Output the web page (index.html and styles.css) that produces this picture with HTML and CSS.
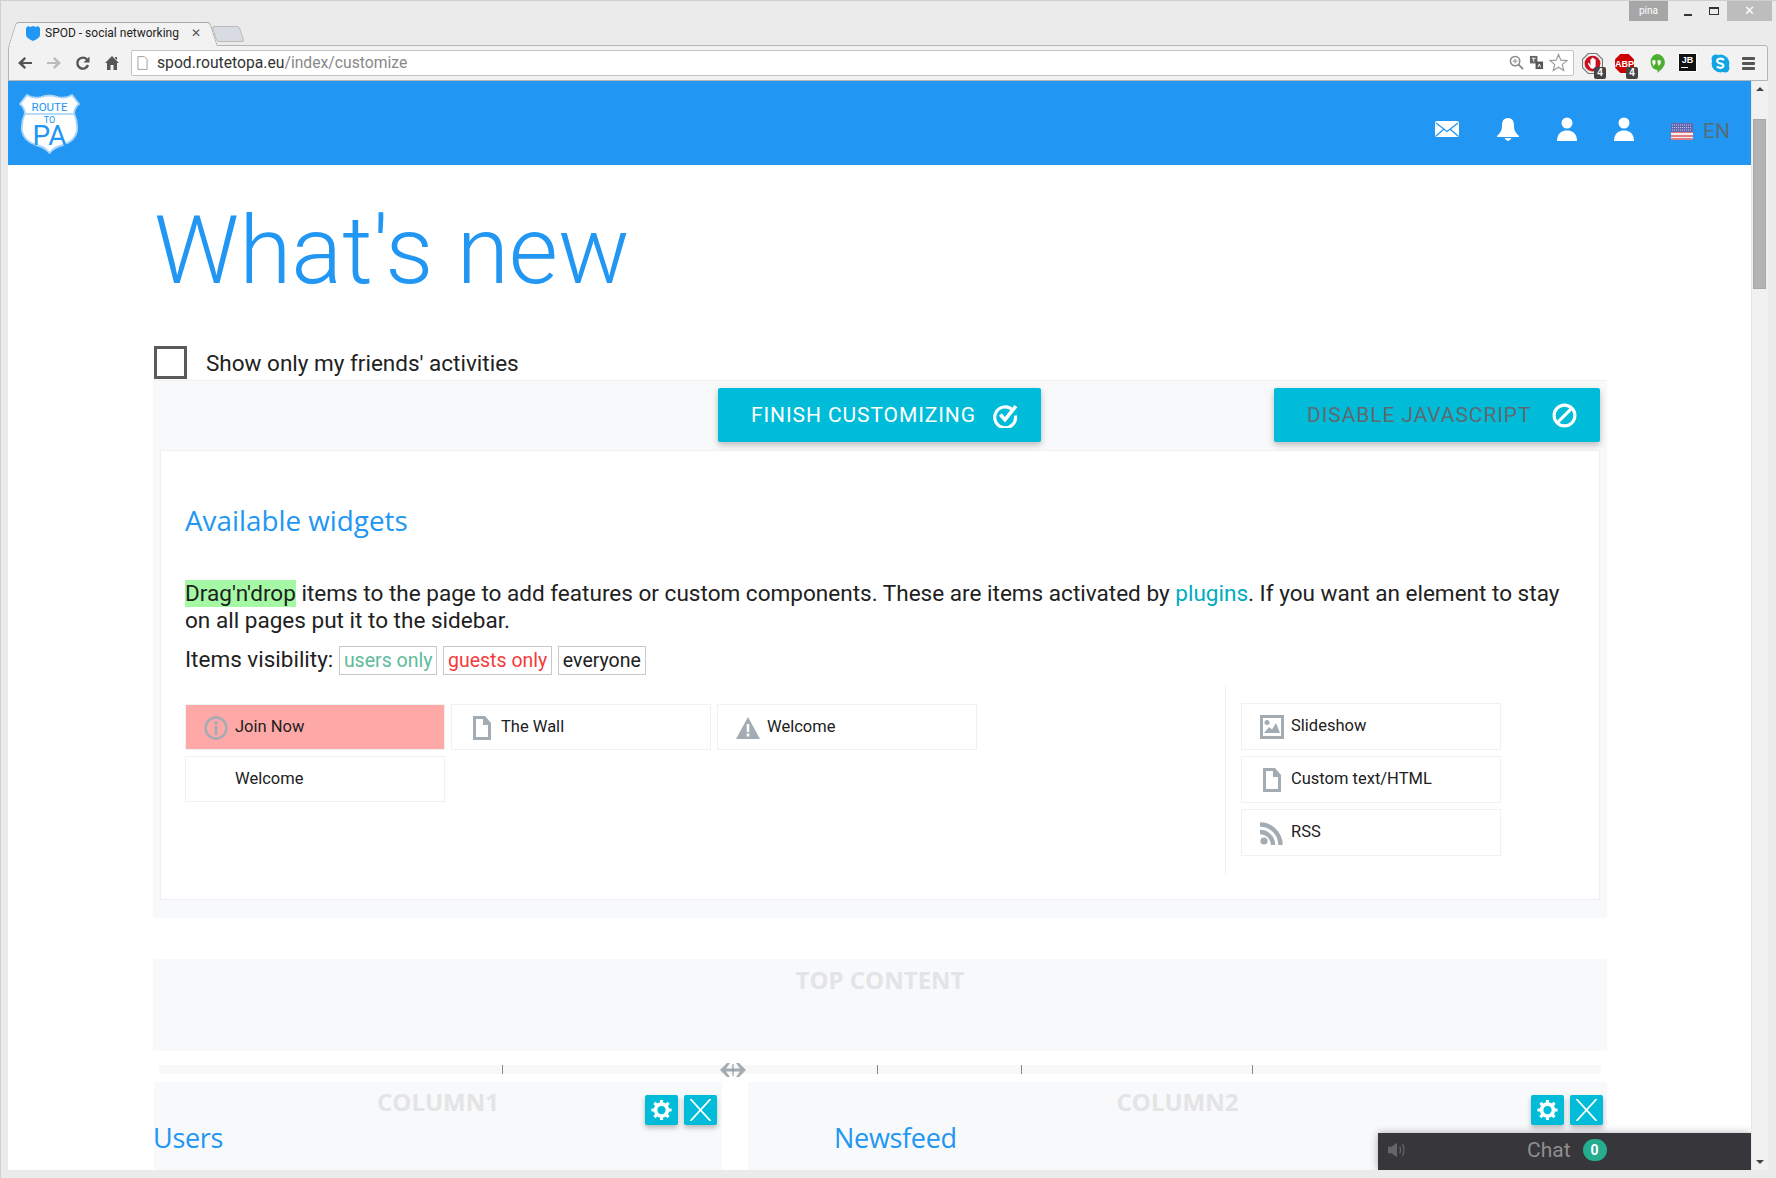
FILE: index.html
```html
<!DOCTYPE html>
<html lang="en">
<head>
  <meta charset="UTF-8" />
  <title>SPOD - social networking</title>
  <link rel="stylesheet" href="styles.css">
</head>
<body>
<div class="window">
  <div class="tabstrip">
    <div class="tab">
      <svg class="favicon" viewBox="0 0 16 16"><path d="M1 3 L3 1 L5 2 L8 1 L11 2 L13 1 L15 3 L15 10 Q15 13 8 16 Q1 13 1 10 Z" fill="#2196f3"/></svg>
      <span class="tab-title">SPOD - social networking</span>
      <span class="tab-close">✕</span>
    </div>
    <div class="newtab"></div>
    <div class="winbtns">
      <span class="user-badge">pina</span>
      <span class="winbtn"><i class="min"></i></span>
      <span class="winbtn"><i class="max"></i></span>
      <span class="winclose">✕</span>
    </div>
  </div>
  <div class="toolbar">
    <svg class="navicon" viewBox="0 0 16 16"><path d="M15 7 H6 L9 3.5 L7.5 2 L1 8 L7.5 14 L9 12.5 L6 9 H15 Z" fill="#555"/></svg>
    <svg class="navicon" viewBox="0 0 16 16"><path d="M1 7 H10 L7 3.5 L8.500 2 L15 8 L8.500 14 L7 12.5 L10 9 H1 Z" fill="#bbb"/></svg>
    <svg class="navicon" viewBox="0 0 16 16"><path d="M13 10 A5.500 5.500 0 1 1 12 4.500" fill="none" stroke="#555" stroke-width="2.400"/><path d="M14.500 1.500 V7.500 H8.500 Z" fill="#555"/></svg>
    <svg class="navicon" viewBox="0 0 16 16"><path d="M8 1 L15 8 H13 V15 H9.500 V10 H6.500 V15 H3 V8 H1 Z M11 2 H13 V5 L11 3 Z" fill="#555"/></svg>
    <div class="omnibox">
      <svg class="pageicon" viewBox="0 0 12 15"><path d="M1 .5 H8 L11 3.500 V14.500 H1 Z" fill="#fff" stroke="#999"/></svg>
      <span class="host">spod.routetopa.eu</span><span class="path">/index/customize</span>
      <span class="omni-right">
        <svg class="omni-ico" viewBox="0 0 16 16"><circle cx="6.500" cy="6.500" r="5" fill="none" stroke="#888" stroke-width="1.600"/><path d="M10 10 L15 15" stroke="#888" stroke-width="2"/><path d="M4 6.500 H9 M6.500 4 V9" stroke="#888"/></svg>
        <svg class="omni-ico" viewBox="0 0 16 16"><rect x="1" y="1" width="8" height="8" fill="#666"/><rect x="7" y="7" width="8" height="8" fill="#555"/><path d="M3 3.500 H7 M5 3.500 V7 M9.500 13 L11 9.500 L12.500 13" stroke="#fff" fill="none"/></svg>
        <svg class="omni-star" viewBox="0 0 20 20"><path d="M10 1.500 L12.500 7.500 L19 8 L14 12 L15.500 18.500 L10 15 L4.500 18.500 L6 12 L1 8 L7.500 7.500 Z" fill="#fff" stroke="#999" stroke-width="1.200"/></svg>
      </span>
    </div>
    <div class="extensions">
      <span class="ext">
        <svg viewBox="0 0 20 20"><path d="M6 .5 H14 L19.500 6 V14 L14 19.500 H6 L.5 14 V6 Z" fill="#eee" stroke="#777"/><circle cx="10" cy="10" r="7.500" fill="#c8101e"/><path d="M6.500 9 L8 12 V6 H9.200 V9 V4.500 H10.500 V9 V5 H11.800 V9 V6 H13 V12 Q13 15 10 15 Q8 15 7 12.500 L5.500 10 Z" fill="#fff"/></svg>
        <b class="ext-count">4</b>
      </span>
      <span class="ext">
        <svg viewBox="0 0 20 20"><path d="M6 1 H14 L19 6 V14 L14 19 H6 L1 14 V6 Z" fill="#c00"/></svg>
        <em class="abp">ABP</em>
        <b class="ext-count">4</b>
      </span>
      <span class="ext">
        <svg viewBox="0 0 20 20"><path d="M10 1 A8 8 0 0 1 18 9 C18 13 14 16 11 19 V16.500 A8 8 0 0 1 10 1 Z" fill="#4caf2f"/><path d="M6 7 H9 V10 L7.500 12 H6.500 L7 10 H6 Z M11 7 H14 V10 L12.500 12 H11.500 L12 10 H11 Z" fill="#fff"/></svg>
      </span>
      <span class="ext"><span class="jb">JB<i class="jb-line"></i></span></span>
      <span class="ext">
        <svg viewBox="0 0 20 20"><circle cx="10" cy="10" r="8.500" fill="#12a5e6"/><circle cx="5.500" cy="5.500" r="4" fill="#12a5e6"/><circle cx="14.500" cy="14.500" r="4" fill="#12a5e6"/><path d="M13.500 6.500 Q10 4.500 7.500 6 Q5.500 8 8.500 9.500 L11.500 10.500 Q14 12 12 13.500 Q9.500 15 6.500 13" fill="none" stroke="#fff" stroke-width="2"/></svg>
      </span>
      <span class="menu-btn"><i></i><i></i><i></i></span>
    </div>
  </div>

  <div class="viewport">
    <div class="page">
      <header class="topbar">
        <svg class="logo" viewBox="0 0 61 61">
          <path d="M8 2 Q15 6 22 4 Q30 1 39 4 Q46 6 53 2 L60 11 Q56 14 55 20 Q59 29 58 38 Q56 48 44 52 Q35 54 30.500 60 Q26 54 17 52 Q5 48 3 38 Q2 29 6 20 Q5 14 1 11 Z" fill="#fff" stroke="#a9d4f8" stroke-width="1.800"/>
          <path d="M6 21 H55" stroke="#9fd0f8" stroke-width="1.500"/>
          <text x="30.500" y="18" class="logo-route">ROUTE</text>
          <text x="30.500" y="30" class="logo-to">TO</text>
          <text x="30.500" y="52" class="logo-pa">PA</text>
        </svg>
        <nav class="topnav">
          <svg class="mail" viewBox="0 0 24 16"><rect width="24" height="16" rx="2" fill="#fff"/><path d="M1 2 L12 10.500 L23 2 M1 15 L9 8 M23 15 L15 8" fill="none" stroke="#2196f3" stroke-width="1.300"/></svg>
          <svg class="bell" viewBox="0 0 24 24"><path d="M12 1 C17 1 18 5 18 9 C18 14 20 16 23 19 V20 H1 V19 C4 16 6 14 6 9 C6 5 7 1 12 1 Z" fill="#fff"/><path d="M8.500 21 H15.500 Q14 24 12 24 Q10 24 8.500 21 Z" fill="#fff"/></svg>
          <svg class="person" viewBox="0 0 20 24"><circle cx="10" cy="6" r="5.500" fill="#fff"/><path d="M0 24 C0 16 5 13.500 10 13.500 C15 13.500 20 16 20 24 Z" fill="#fff"/></svg>
          <svg class="person" viewBox="0 0 20 24"><circle cx="10" cy="6" r="5.500" fill="#fff"/><path d="M0 24 C0 16 5 13.500 10 13.500 C15 13.500 20 16 20 24 Z" fill="#fff"/></svg>
          <span class="lang">
            <svg class="flag" viewBox="0 0 22 17">
              <rect width="22" height="17" fill="#f4f0f0"/>
              <path d="M0 1 H22 M0 5 H22 M0 9 H22 M0 13 H22 M0 16 H22" stroke="#d9535f" stroke-width="1.600"/>
              <rect width="22" height="9" fill="#6367b0"/>
              <path d="M1 2 H21 M1 4.500 H21 M1 7 H21" stroke="#c6c8e6" stroke-dasharray="1 1"/>
            </svg>
            EN
          </span>
        </nav>
      </header>

      <main class="content">
        <h1 class="page-title">What's new</h1>
        <label class="friends">
          <span class="checkbox"></span>
          Show only my friends' activities
        </label>

        <section class="customize">
          <div class="actions">
            <button class="btn btn-finish">FINISH CUSTOMIZING
              <svg class="btn-ico" viewBox="0 0 24 24"><path d="M19 7 A10 10 0 1 0 21.500 12" fill="none" stroke="#fff" stroke-width="3"/><path d="M7 11 L11.500 16 L22 3" fill="none" stroke="#fff" stroke-width="3.400"/></svg>
            </button>
            <button class="btn btn-disable">DISABLE JAVASCRIPT
              <svg class="btn-ico" viewBox="0 0 24 24"><circle cx="12" cy="12" r="10" fill="none" stroke="#fff" stroke-width="3"/><path d="M5 19 L19 5" stroke="#fff" stroke-width="3"/></svg>
            </button>
          </div>
          <div class="widgets-card">
            <h2 class="widgets-title">Available widgets</h2>
            <p class="widgets-text"><span class="hl">Drag'n'drop</span> items to the page to add features or custom components. These are items activated by <a class="link">plugins</a>. If you want an element to stay on all pages put it to the sidebar.</p>
            <p class="visibility">Items visibility:
              <span class="tag tag-users">users only</span>
              <span class="tag tag-guests">guests only</span>
              <span class="tag">everyone</span>
            </p>
            <div class="widgets-lists">
              <div class="widgets-main">
                <div class="widget widget-guest">
                  <svg class="w-ico" viewBox="0 0 24 24"><circle cx="12" cy="12" r="10.500" fill="none" stroke="#a3acb2" stroke-width="2.500"/><circle cx="12" cy="7" r="1.800" fill="#a3acb2"/><rect x="10.500" y="10" width="3" height="9" fill="#a3acb2"/></svg>
                  Join Now
                </div>
                <div class="widget">
                  <svg class="w-ico" viewBox="0 0 24 24"><path d="M4 0 H15 L21 7 V24 H3 V0 Z M6 3 V21 H18 V9 H13 V3 Z" fill="#a3acb2" fill-rule="evenodd"/></svg>
                  The Wall
                </div>
                <div class="widget">
                  <svg class="w-ico" viewBox="0 0 24 24"><path d="M12 1 L24 23 H0 Z" fill="#a3acb2"/><rect x="10.700" y="8" width="2.600" height="8" fill="#fff"/><rect x="10.700" y="17.500" width="2.600" height="3" fill="#fff"/></svg>
                  Welcome
                </div>
                <div class="widget"><span class="w-ico"></span>Welcome</div>
              </div>
              <div class="widgets-side">
                <div class="widget">
                  <svg class="w-ico" viewBox="0 0 24 24"><path d="M0 0 H24 V24 H0 Z M3 3 V21 H21 V3 Z" fill="#a3acb2" fill-rule="evenodd"/><circle cx="7" cy="7.500" r="2.500" fill="#a3acb2"/><path d="M4 18 L9 12 L12 14.500 L16 8 L20 18 Z" fill="#a3acb2"/></svg>
                  Slideshow
                </div>
                <div class="widget">
                  <svg class="w-ico" viewBox="0 0 24 24"><path d="M4 0 H15 L21 7 V24 H3 V0 Z M6 3 V21 H18 V9 H13 V3 Z" fill="#a3acb2" fill-rule="evenodd"/></svg>
                  Custom text/HTML
                </div>
                <div class="widget">
                  <svg class="w-ico" viewBox="0 0 24 24"><circle cx="4" cy="20" r="3.600" fill="#a3acb2"/><path d="M0 11 A13 13 0 0 1 13 24 M0 3.500 A20.500 20.500 0 0 1 20.500 24" fill="none" stroke="#a3acb2" stroke-width="4.400"/></svg>
                  RSS
                </div>
              </div>
            </div>
          </div>
        </section>

        <section class="area area-top">TOP CONTENT</section>

        <div class="slider">
          <i class="tick tick-1"></i><i class="tick tick-2"></i><i class="tick tick-3"></i><i class="tick tick-4"></i>
          <svg class="slider-handle" viewBox="0 0 26 16"><path d="M0 8 L7 1 H10 L6 6.500 H20 L16 1 H19 L26 8 L19 15 H16 L20 9.500 H6 L10 15 H7 Z" fill="#a3acb2"/><path d="M13 2 V14" stroke="#888"/></svg>
        </div>

        <div class="columns">
          <section class="column column-1">
            <div class="col-label">COLUMN1</div>
            <div class="col-tools">
              <button class="tool"><svg viewBox="0 0 24 24"><use href="#gear"/></svg></button>
              <button class="tool"><svg viewBox="0 0 24 24"><use href="#cross"/></svg></button>
            </div>
            <h3 class="col-title">Users</h3>
          </section>
          <section class="column column-2">
            <div class="col-label">COLUMN2</div>
            <div class="col-tools">
              <button class="tool"><svg viewBox="0 0 24 24"><use href="#gear"/></svg></button>
              <button class="tool"><svg viewBox="0 0 24 24"><use href="#cross"/></svg></button>
            </div>
            <h3 class="col-title">Newsfeed</h3>
          </section>
        </div>
      </main>

      <div class="chat">
        <svg class="chat-sound" viewBox="0 0 22 20"><path d="M1 6.500 H5 L11 2 V18 L5 13.500 H1 Z" fill="#666"/><path d="M14 6 Q16 10 14 14 M17 3.500 Q20.500 10 17 16.500" fill="none" stroke="#666" stroke-width="1.300"/></svg>
        <span class="chat-label">Chat</span>
        <span class="chat-count">0</span>
      </div>
    </div>
    <div class="scrollbar">
      <span class="arrow arrow-up"></span>
      <span class="thumb"></span>
      <span class="arrow arrow-down"></span>
    </div>
  </div>
</div>

<svg class="defs" width="0" height="0">
  <defs>
    <g id="gear">
      <circle cx="12" cy="12" r="6.500" fill="none" stroke="#fff" stroke-width="4"/>
      <path d="M12 1 V5 M12 19 V23 M1 12 H5 M19 12 H23 M4.200 4.200 L7 7 M17 17 L19.800 19.800 M19.800 4.200 L17 7 M7 17 L4.200 19.800" stroke="#fff" stroke-width="3.400"/>
    </g>
    <path id="cross" d="M1 0 L23 24 M23 0 L1 24" stroke="#fff" stroke-width="2"/>
  </defs>
</svg>
</body>
</html>
```

FILE: styles.css
```css
* {
  box-sizing: border-box;
}
html, body {
  margin: 0;
  height: 100%;
  overflow: hidden;
}
body {
  font-family: Roboto, sans-serif;
  color: #212121;
  background: #ebebeb;
}
.defs {
  position: absolute;
}
.window {
  height: 1178px;
  display: flex;
  flex-direction: column;
  padding: 0 8px 8px 7px;
  border: 1px solid #d0d0d0;
  border-width: 1px 0 0 1px;
}

/* browser chrome */
.tabstrip {
  height: 44px;
  display: flex;
  align-items: flex-end;
  flex: none;
  padding-left: 11px;
}
.tab {
  position: relative;
  z-index: 1;
  width: 188px;
  height: 24px;
  display: flex;
  align-items: center;
  gap: 4px;
  padding: 0 6px 4px 6px;
  margin-bottom: -1px;
  background: #f2f2f2;
  border-top: 1px solid #aaa;
  font-size: 12px;
  color: #222;
}
.tab::before,
.tab::after {
  content: "";
  position: absolute;
  z-index: -1;
  top: -1px;
  bottom: 0;
  width: 14px;
  background: #f2f2f2;
  border-top: 1px solid #aaa;
}
.tab::before {
  left: -7px;
  border-left: 1px solid #aaa;
  border-radius: 3px 0 0 0;
  transform: skewX(-18deg);
}
.tab::after {
  right: -7px;
  border-right: 1px solid #aaa;
  border-radius: 0 3px 0 0;
  transform: skewX(18deg);
}
.favicon {
  width: 16px;
  height: 16px;
  flex: none;
}
.tab-title {
  white-space: nowrap;
  flex: 1;
}
.tab-close {
  font-size: 12px;
  color: #555;
}
.newtab {
  width: 28px;
  height: 16px;
  margin: 0 0 3px 7px;
  background: #d8dce2;
  border: 1px solid #bbb;
  border-radius: 3px;
  transform: skewX(18deg);
}
.winbtns {
  margin-left: auto;
  align-self: flex-start;
  display: flex;
  height: 20px;
  margin-right: -4px;
}
.user-badge {
  width: 39px;
  background: #a6a6a6;
  color: #fff;
  font-size: 10px;
  text-align: center;
  line-height: 20px;
  margin-right: 7px;
}
.winbtn {
  width: 26px;
  display: flex;
  align-items: center;
  justify-content: center;
}
.min {
  display: block;
  width: 8px;
  height: 2px;
  margin-top: 7px;
  background: #333;
}
.max {
  display: block;
  width: 10px;
  height: 8px;
  border: 1px solid #333;
  border-top-width: 2px;
}
.winclose {
  width: 45px;
  background: #bdbdbd;
  color: #fff;
  font-size: 13px;
  line-height: 20px;
  text-align: center;
}
.toolbar {
  height: 36px;
  flex: none;
  display: flex;
  align-items: center;
  padding: 0 0 0 8px;
  background: #f2f2f2;
  border: 1px solid #b5b5b5;
  border-radius: 3px 3px 0 0;
}
.navicon {
  width: 16px;
  height: 16px;
  margin-right: 13px;
  flex: none;
}
.omnibox {
  flex: none;
  width: 1443px;
  height: 26px;
  margin: -1px 0 0 -2px;
  display: flex;
  align-items: center;
  padding: 0 5px;
  background: #fff;
  border: 1px solid #c4c4c4;
  border-radius: 2px;
  font-size: 15.700px;
}
.pageicon {
  width: 11px;
  height: 14px;
  margin-right: 9px;
}
.host {
  color: #333;
}
.path {
  color: #888;
}
.omni-right {
  margin-left: auto;
  display: flex;
  align-items: center;
  gap: 5px;
}
.omni-ico {
  width: 15px;
  height: 15px;
}
.omni-star {
  width: 19px;
  height: 19px;
}
.extensions {
  display: flex;
  align-items: center;
  margin-left: 8px;
  gap: 11px;
}
.ext {
  position: relative;
  width: 21px;
  height: 21px;
  display: block;
}
.ext svg {
  display: block;
  width: 21px;
  height: 21px;
}
.ext-count {
  position: absolute;
  right: -3px;
  bottom: -5px;
  width: 12px;
  height: 12px;
  background: #444;
  color: #fff;
  font: bold 10px/12px "Liberation Sans", sans-serif;
  text-align: center;
  border-radius: 2px;
}
.abp {
  position: absolute;
  top: 6px;
  left: 0;
  width: 21px;
  color: #fff;
  font: normal bold 9px/10px "Liberation Sans", sans-serif;
  text-align: center;
}
.jb {
  display: block;
  width: 19px;
  height: 19px;
  background: #111;
  border: 1px solid #fff;
  color: #fff;
  font: bold 9px/12px "Liberation Sans", sans-serif;
  text-align: center;
}
.jb-line {
  display: block;
  width: 7px;
  height: 1px;
  margin: 1px 0 0 2px;
  background: #fff;
}
.menu-btn {
  display: flex;
  flex-direction: column;
  gap: 2px;
  width: 13px;
}
.menu-btn i {
  height: 3px;
  background: #555;
  border-radius: 1px;
}

/* page */
.viewport {
  flex: 1;
  min-height: 0;
  display: flex;
  background: #fff;
}
.page {
  flex: 1;
  min-width: 0;
  position: relative;
  overflow: hidden;
}
.topbar {
  height: 84px;
  background: #2196f3;
  display: flex;
  align-items: center;
  justify-content: space-between;
  padding: 0 21px 0 11px;
}
.logo {
  width: 61px;
  height: 61px;
}
.logo text {
  fill: #2196f3;
  text-anchor: middle;
  font-family: Roboto, sans-serif;
}
.logo-route {
  font-size: 11.500px;
}
.logo-to {
  font-size: 9px;
}
.logo-pa {
  font-size: 28px;
}
.topnav {
  display: flex;
  align-items: center;
  gap: 37px;
  margin-top: 12px;
}
.mail {
  width: 24px;
  height: 16px;
}
.bell {
  width: 24px;
  height: 24px;
}
.person {
  width: 20px;
  height: 24px;
}
.lang {
  display: flex;
  align-items: center;
  gap: 10px;
  margin-top: 4px;
  color: #546e7a;
  font-size: 21px;
}
.flag {
  width: 22px;
  height: 17px;
}
.content {
  padding: 0 144px 0 146px;
}
.page-title {
  margin: 30px 0 0;
  font-size: 95px;
  line-height: 112px;
  font-weight: 300;
  color: #2196f3;
}
.friends {
  display: flex;
  align-items: center;
  gap: 19px;
  height: 34px;
  margin-top: 39px;
  padding-bottom: 1px;
  font-size: 22.500px;
}
.checkbox {
  width: 33px;
  height: 33px;
  border: 3px solid #5a5a5a;
}
.customize {
  background: #f8f9fb;
  border-top: 1px solid #eff0f3;
  padding: 7px 7px 18px;
  margin-left: -1px;
}
.actions {
  display: flex;
  justify-content: flex-end;
  gap: 233px;
  height: 54px;
  margin-bottom: 8px;
}
.btn {
  display: flex;
  align-items: center;
  justify-content: space-between;
  height: 54px;
  padding: 0 23px 0 33px;
  border: none;
  border-radius: 2px;
  background: #00bcd9;
  box-shadow: 0 3px 6px rgba(0, 0, 0, 0.25);
  font: 400 21px Roboto, sans-serif;
  letter-spacing: 0.900px;
  color: #fff;
}
.btn-finish {
  width: 323px;
}
.btn-disable {
  width: 326px;
  color: #5f6a70;
}
.btn-ico {
  width: 25px;
  height: 25px;
}
.widgets-card {
  height: 450px;
  background: #fff;
  border: 1px solid #eff0f3;
  padding: 0 24px;
}
.widgets-title {
  margin: 51px 0 0;
  font: 400 27.800px/36px "Open Sans", sans-serif;
  color: #2196f3;
}
.widgets-text {
  margin: 42px 0 0;
  font-size: 22.560px;
  line-height: 27px;
}
.hl {
  background: #a5f9a5;
}
.link {
  color: #00acc1;
}
.visibility {
  margin: 11px 0 0;
  font-size: 22.500px;
  line-height: 29px;
}
.tag {
  display: inline-block;
  padding: 0 4px;
  font-size: 19.500px;
  line-height: 27px;
  border: 1px solid #c8c8c8;
}
.tag-users {
  color: #5dbb99;
}
.tag-guests {
  color: #f43b3b;
}
.widgets-lists {
  display: flex;
  margin-top: 10px;
}
.widgets-main {
  width: 1040px;
  display: flex;
  flex-wrap: wrap;
  align-content: flex-start;
  gap: 6px;
  padding-top: 19px;
}
.widgets-main .widget {
  height: 46px;
}
.widgets-side {
  width: 275px;
  display: flex;
  flex-direction: column;
  gap: 6px;
  padding: 18px 0 18px 15px;
  border-left: 1px solid #eff0f3;
  height: 189px;
}
.widget {
  width: 260px;
  height: 47px;
  display: flex;
  align-items: center;
  gap: 7px;
  padding: 0 18px 2px;
  background: #fff;
  border: 1px solid #f0f1f3;
  font-size: 16.500px;
}
.widget-guest {
  background: #ffa8a8;
}
.w-ico {
  display: block;
  flex: none;
  width: 24px;
  height: 24px;
  margin-top: 3px;
}
.area {
  background: #f8f9fb;
  color: #e3e4e5;
  font-family: "Open Sans", sans-serif;
  font-weight: 700;
  text-align: center;
}
.area-top {
  height: 92px;
  margin: 41px 0 0 -1px;
  font-size: 24px;
  line-height: 42px;
}
.slider {
  position: relative;
  height: 9px;
  margin: 14px 6px 0 5px;
  background: #f8f8f8;
}
.tick {
  position: absolute;
  top: 0;
  width: 1px;
  height: 9px;
  background: #888;
}
.tick-1 { left: 343px; }
.tick-2 { left: 718px; }
.tick-3 { left: 862px; }
.tick-4 { left: 1093px; }
.slider-handle {
  position: absolute;
  left: 561px;
  top: -3px;
  width: 26px;
  height: 16px;
}
.columns {
  display: flex;
  gap: 26px;
  margin-top: 8px;
}
.column {
  position: relative;
  height: 120px;
  background: #f8f9fb;
}
.column-1 {
  width: 568px;
}
.column-2 {
  width: 859px;
}
.col-label {
  color: #e3e4e5;
  font: 700 24px/40px "Open Sans", sans-serif;
  text-align: center;
}
.col-tools {
  position: absolute;
  top: 13px;
  right: 5px;
  display: flex;
  gap: 6px;
}
.column-2 .col-tools {
  right: 4px;
}
.tool {
  width: 33px;
  height: 30px;
  padding: 4px;
  border: none;
  border-radius: 2px;
  background: #00bcd9;
  box-shadow: 0 3px 5px rgba(0, 0, 0, 0.25);
}
.tool svg {
  display: block;
  width: 100%;
  height: 100%;
}
.col-title {
  margin: -2px 0 0 -1px;
  font: 400 27px/36px "Open Sans", sans-serif;
  letter-spacing: -0.300px;
  color: #2196f3;
}
.column-2 .col-title {
  padding-left: 87px;
}
.chat {
  position: absolute;
  right: 0;
  bottom: 0;
  width: 373px;
  height: 37px;
  display: flex;
  align-items: center;
  padding: 0 0 3px 9px;
  background: #37363b;
  box-shadow: 0 0 8px rgba(0, 0, 0, 0.3);
  color: #8e8e8e;
  font-size: 21px;
}
.chat-sound {
  width: 20px;
  height: 18px;
}
.chat-label {
  margin-left: 120px;
}
.chat-count {
  width: 24px;
  height: 22px;
  margin-left: 12px;
  border-radius: 11px;
  background: #26ad8f;
  color: #fff;
  font-size: 14px;
  font-weight: 700;
  line-height: 22px;
  text-align: center;
}

/* scrollbar */
.scrollbar {
  position: relative;
  width: 17px;
  flex: none;
  display: flex;
  flex-direction: column;
  background: #f1f1f1;
  border-left: 1px solid #e6e6e6;
}
.thumb {
  display: block;
  width: 13px;
  height: 170px;
  margin: 1px 0 0 1px;
  background: #b3b3b3;
  border: 1px solid #a8a8a8;
}
.arrow {
  width: 0;
  height: 0;
  border-left: 4px solid transparent;
  border-right: 4px solid transparent;
}
.arrow-up {
  margin: 6px 0 27px 4px;
  border-bottom: 4px solid #444;
}
.arrow-down {
  margin: auto 0 6px 4px;
  border-top: 4px solid #444;
}
```
